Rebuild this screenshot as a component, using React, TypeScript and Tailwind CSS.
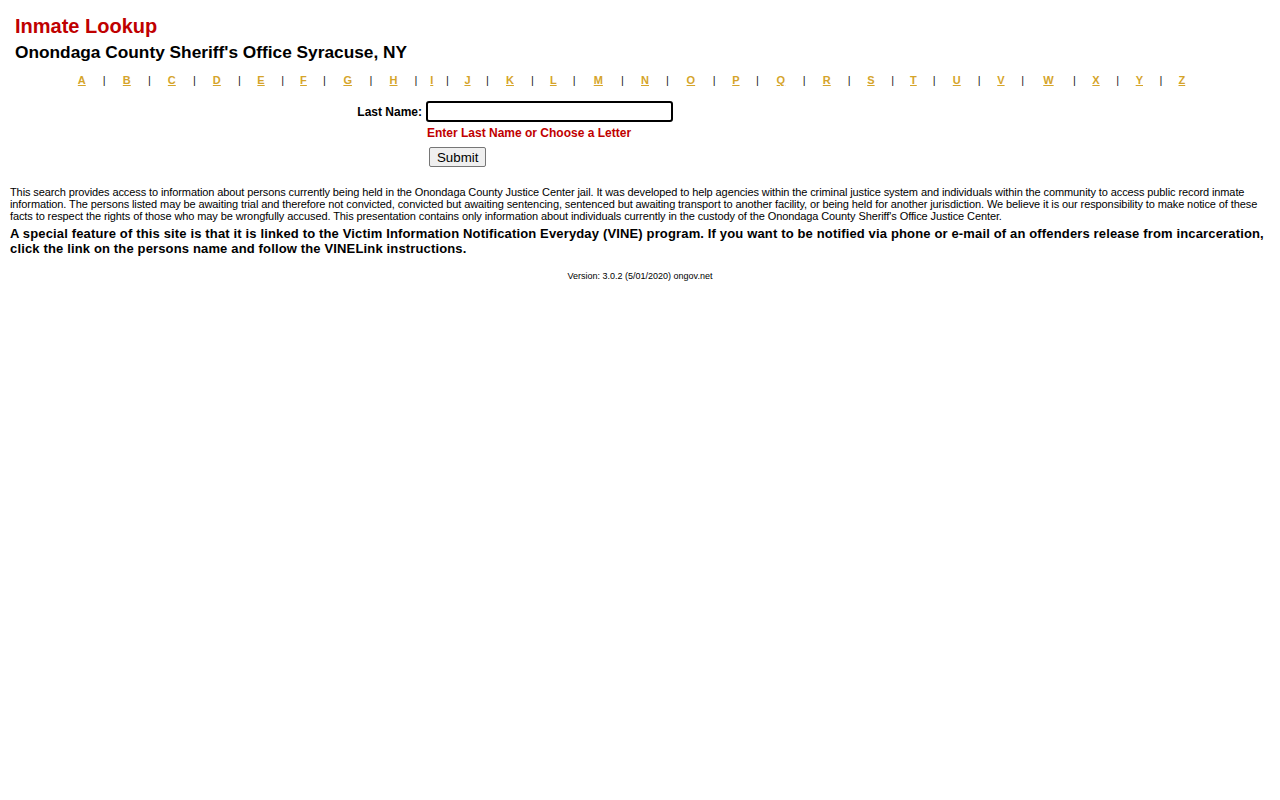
import React from "react";

const letters = "ABCDEFGHIJKLMNOPQRSTUVWXYZ".split("");

export default function App() {
  return (
    <div className="min-h-[800px] bg-white text-black font-['Liberation_Sans',Arial,sans-serif]">
      <div className="px-[15px] pt-[15px]">
        <h1 className="text-[20px] font-bold leading-[23px] text-[#c00000]">Inmate Lookup</h1>
        <h2 className="mt-[4px] text-[17.3px] font-bold leading-[20px]">Onondaga County Sheriff's Office Syracuse, NY</h2>
      </div>
      <table className="ml-[66px] mt-[9px] w-[1130px] border-separate border-spacing-[2px] text-[11px] font-bold leading-[13px]">
        <tbody>
          <tr>
            {letters.map((l, i) => (
              <React.Fragment key={l}>
                <td className="p-px text-center">
                  <a href="#" className="text-[#d5a42a] underline">{l}</a>
                </td>
                {i < letters.length - 1 && <td className="p-px text-center font-normal text-[#222]">|</td>}
              </React.Fragment>
            ))}
          </tr>
        </tbody>
      </table>
      <div className="mt-[11px] flex flex-col">
        <div className="flex items-center">
          <label className="w-[426px] pr-[4px] text-right text-[12px] font-bold">Last Name:</label>
          <input className="h-[21px] w-[247px] rounded-[3px] border-2 border-black outline-none" />
        </div>
        <div className="ml-[427px] mt-[4px] text-[12px] font-bold leading-[15px] text-[#c00000]">Enter Last Name or Choose a Letter</div>
        <div className="ml-[429px] mt-[6px] flex">
          <button className="h-[20px] rounded-[2px] border border-[#767676] bg-[#efefef] px-[7px] text-[13.3px] leading-[15px]">Submit</button>
        </div>
      </div>
      <div className="mt-[19px] px-[10px]">
        <p className="text-[11px] leading-[12px] tracking-[-0.1px]">
          This search provides access to information about persons currently being held in the Onondaga County Justice Center jail. It was developed to help agencies within the criminal justice system and individuals within the community to access public record inmate information. The persons listed may be awaiting trial and therefore not convicted, convicted but awaiting sentencing, sentenced but awaiting transport to another facility, or being held for another jurisdiction. We believe it is our responsibility to make notice of these facts to respect the rights of those who may be wrongfully accused. This presentation contains only information about individuals currently in the custody of the Onondaga County Sheriff's Office Justice Center.
        </p>
        <p className="mt-[4px] text-[13px] font-bold leading-[15px] tracking-[0.15px]">
          A special feature of this site is that it is linked to the Victim Information Notification Everyday (VINE) program. If you want to be notified via phone or e-mail of an offenders release from incarceration, click the link on the persons name and follow the VINELink instructions.
        </p>
        <p className="mt-[15px] text-center text-[9px] leading-[11px]">Version: 3.0.2 (5/01/2020) ongov.net</p>
      </div>
    </div>
  );
}
